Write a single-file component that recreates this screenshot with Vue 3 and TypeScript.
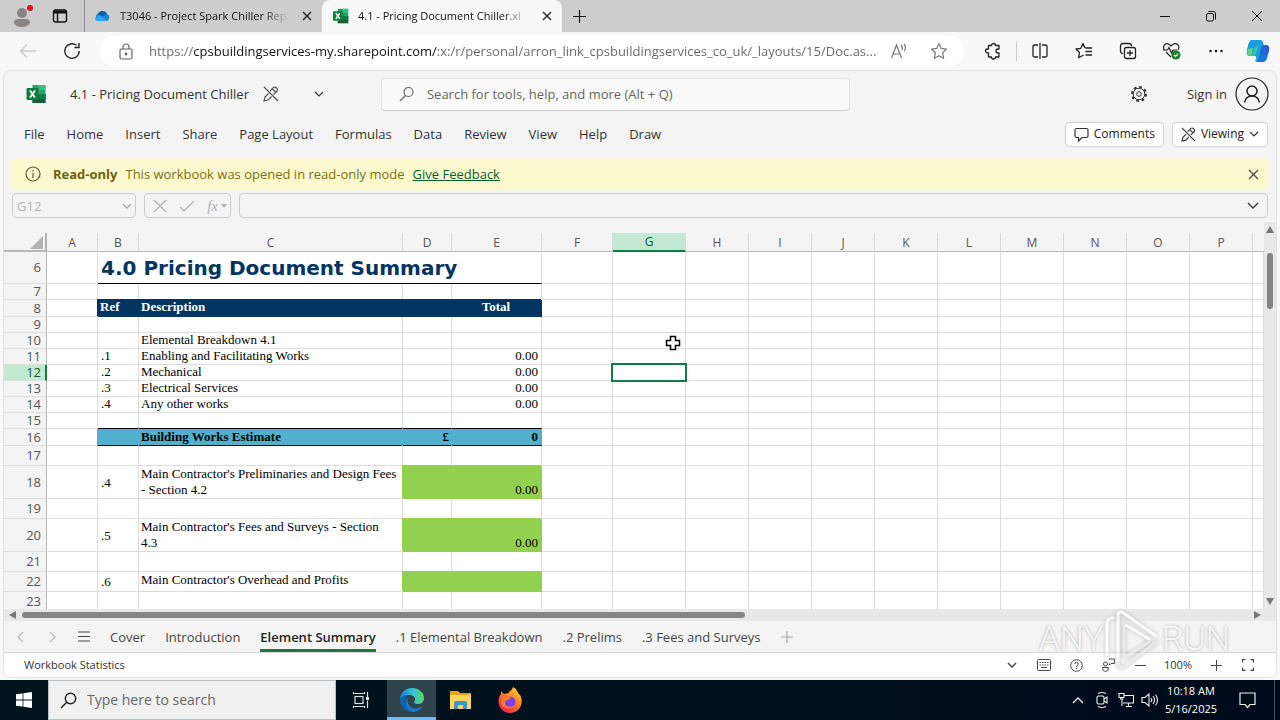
<script setup lang="ts">
import { ref } from 'vue'

interface Row { n: number; h: number; band?: string; b?: string; c?: string; d?: string; e?: string }

const url = ref('https://cpsbuildingservices-my.sharepoint.com/:x:/r/personal/arron_link_cpsbuildingservices_co_uk/_layouts/15/Doc.as...')
const cellRef = ref('G12')
const formula = ref('')
const search = ref('')
const taskSearch = ref('')

const browserTabs = [
  { title: 'T3046 - Project Spark Chiller Repl', icon: 'cloud', active: false },
  { title: '4.1 - Pricing Document Chiller.xl', icon: 'excel', active: true },
]
const menus = ['File', 'Home', 'Insert', 'Share', 'Page Layout', 'Formulas', 'Data', 'Review', 'View', 'Help', 'Draw']
const sheets = ['Cover', 'Introduction', 'Element Summary', '.1 Elemental Breakdown', '.2 Prelims', '.3 Fees and Surveys']
const columns = ['A', 'B', 'C', 'D', 'E', 'F', 'G', 'H', 'I', 'J', 'K', 'L', 'M', 'N', 'O', 'P']
const tail = [...columns.slice(5), '']

const rows: Row[] = [
  { n: 6, h: 32, band: 'title', b: '4.0 Pricing Document Summary' },
  { n: 7, h: 16 },
  { n: 8, h: 17, band: 'navy', b: 'Ref', c: 'Description', e: 'Total' },
  { n: 9, h: 16 },
  { n: 10, h: 16, c: 'Elemental Breakdown 4.1' },
  { n: 11, h: 16, b: '.1', c: 'Enabling and Facilitating Works', e: '0.00' },
  { n: 12, h: 16, b: '.2', c: 'Mechanical', e: '0.00' },
  { n: 13, h: 16, b: '.3', c: 'Electrical Services', e: '0.00' },
  { n: 14, h: 16, b: '.4', c: 'Any other works', e: '0.00' },
  { n: 15, h: 16, band: 'before-total' },
  { n: 16, h: 17, band: 'total', c: 'Building Works Estimate', d: '£', e: '0' },
  { n: 17, h: 20 },
  { n: 18, h: 33, band: 'green', b: '.4', c: "Main Contractor's Preliminaries and Design Fees\n- Section 4.2", e: '0.00' },
  { n: 19, h: 20 },
  { n: 20, h: 33, band: 'green', b: '.5', c: "Main Contractor's Fees and Surveys - Section\n4.3", e: '0.00' },
  { n: 21, h: 20 },
  { n: 22, h: 20, band: 'green', b: '.6', c: "Main Contractor's Overhead and Profits" },
  { n: 23, h: 20 },
]
</script>

<template>
  <div class="desktop">
    <header class="tabstrip">
      <button class="profile" aria-label="Profile">
        <svg width="22" height="24" viewBox="0 0 22 24"><circle cx="10" cy="9" r="5" fill="#8a8582"/><path d="M2 19q0-4 4-4h8q4 0 4 4-2 4-8 4t-8-4z" fill="#8a8582"/><circle cx="18" cy="4" r="3" fill="#e00b1c"/></svg>
      </button>
      <button class="workspaces" aria-label="Tab actions">
        <svg width="16" height="16" viewBox="0 0 16 16" fill="none" stroke="#111" stroke-width="1.4"><rect x="1.5" y="2" width="13" height="12" rx="2"/><path d="M2 4h12" stroke-width="3"/><path d="M5.5 4v10"/></svg>
      </button>
      <div v-for="t in browserTabs" :key="t.title" class="btab" :class="{ active: t.active }">
        <svg v-if="t.icon === 'cloud'" width="17" height="16" viewBox="0 0 17 16"><path d="M5 13a4 4 0 0 1-1-7.500A5 5 0 0 1 13 6a3.800 3.800 0 0 1 0 7z" fill="#1683dc"/><path d="M4 5.500A5 5 0 0 1 13 6L6 10z" fill="#0a5ca8"/><path d="M1 10l5-3 8 6H4a3 3 0 0 1-3-3z" fill="#2fa3ee"/></svg>
        <svg v-else width="16" height="16" viewBox="0 0 20 20"><path d="M6 1h13v18H6z" fill="#21a366"/><path d="M12 1h7v5h-7z" fill="#33c481"/><path d="M6 10h13v9H6z" fill="#185c37"/><path d="M12 10h7v5h-7z" fill="#107c41"/><rect y="4" width="12" height="12" rx="1" fill="#107c41"/><path d="M3.500 6.500l5 7m0-7l-5 7" stroke="#fff" stroke-width="1.800"/></svg>
        <span class="btitle">{{ t.title }}</span>
        <button aria-label="Close tab"><svg width="10" height="10" viewBox="0 0 10 10" stroke="#222" stroke-width="1.400"><path d="M1 1l8 8M9 1l-8 8"/></svg></button>
      </div>
      <button class="newtab" aria-label="New tab"><svg width="15" height="15" viewBox="0 0 15 15" stroke="#111" stroke-width="1.200"><path d="M7.500 1v13M1 7.500h13"/></svg></button>
      <div class="winbtns">
        <button aria-label="Minimize"><svg width="12" height="12" viewBox="0 0 12 12" stroke="#111"><path d="M1 6.500h10"/></svg></button>
        <button aria-label="Restore"><svg width="12" height="12" viewBox="0 0 12 12" fill="none" stroke="#111"><rect x="1.500" y="3.500" width="7" height="7.500" rx="1.500"/><path d="M3.500 1.500h5q2 0 2 2v6"/></svg></button>
        <button aria-label="Close"><svg width="12" height="12" viewBox="0 0 12 12" stroke="#111"><path d="M1 1l10 10M11 1L1 11"/></svg></button>
      </div>
    </header>

    <div class="toolbar">
      <button aria-label="Back"><svg width="18" height="16" viewBox="0 0 18 16" fill="none" stroke="#c9c9c9" stroke-width="1.300"><path d="M17 8H1.500M8 1.500L1.500 8 8 14.500"/></svg></button>
      <button aria-label="Refresh"><svg width="18" height="18" viewBox="0 0 18 18" fill="none" stroke="#222" stroke-width="1.400"><path d="M16.300 9A7.300 7.300 0 1 1 13.500 3.300M16 1v4.500h-4.500"/></svg></button>
      <label class="address">
        <svg width="14" height="17" viewBox="0 0 14 17" fill="none" stroke="#666" stroke-width="1.200"><rect x="1" y="6" width="12" height="10" rx="1.500"/><path d="M4 6V4a3 3 0 0 1 6 0v2"/><circle cx="7" cy="11" r=".8" fill="#666"/></svg>
        <input v-model="url" aria-label="Address" />
        <button aria-label="Read aloud"><svg width="18" height="16" viewBox="0 0 18 16" fill="none" stroke="#777" stroke-width="1.200"><path d="M1.500 15L6.500 2l5 13M3 11h7M11 2q2 2 1 5M14 1q2.500 3 .5 7"/></svg></button>
        <button aria-label="Add favorite"><svg width="18" height="18" viewBox="0 0 18 18" fill="none" stroke="#777" stroke-width="1.200" stroke-linejoin="round"><path d="M9 1.500l2.300 4.900 5.200.7-3.800 3.700.9 5.500L9 13.700l-4.600 2.600.9-5.500L1.500 7.100l5.200-.7z"/></svg></button>
      </label>
      <button class="ext" aria-label="Extensions"><svg width="18" height="18" viewBox="0 0 18 18" fill="none" stroke="#222" stroke-width="1.300" stroke-linejoin="round"><path d="M4.500 3.500h3a2 2 0 0 1 4 0H15v3.500h-1a2 2 0 0 0 0 4h1v4h-3.500a2 2 0 0 1-4 0h-3V11h-1a2 2 0 1 1 0-4h1z"/></svg></button>
      <span class="sep"></span>
      <button aria-label="Split screen"><svg width="18" height="18" viewBox="0 0 18 18" fill="none" stroke="#222" stroke-width="1.300"><path d="M7 3H3.500Q2 3 2 4.500v9Q2 15 3.500 15H7M11 3h3.500Q16 3 16 4.500v9q0 1.500-1.500 1.500H11M9 1v16"/></svg></button>
      <button aria-label="Favorites"><svg width="18" height="18" viewBox="0 0 18 18" fill="none" stroke="#222" stroke-width="1.300" stroke-linejoin="round"><path d="M10 6L8 1.500 5.800 6.300 1 7l3.500 3.500-.8 5.300 5-2.800M10.500 6H17M10.500 9.500H17M10.500 13H17"/></svg></button>
      <button aria-label="Collections"><svg width="18" height="18" viewBox="0 0 18 18" fill="none" stroke="#222" stroke-width="1.300"><path d="M4 11.500A2.500 2.500 0 0 1 1.500 9V4A2.500 2.500 0 0 1 4 1.500h6A2.500 2.500 0 0 1 12.500 4"/><rect x="5.500" y="5.500" width="11" height="11" rx="2"/><path d="M11 8v6M8 11h6"/></svg></button>
      <button aria-label="Browser essentials"><svg width="20" height="18" viewBox="0 0 20 18" fill="none" stroke="#222" stroke-width="1.200"><path d="M2.500 8C0 4 3.500.5 7 2.200L9 4l2-1.800C15 .5 18.500 4 16 8M4 10l5 5M1 8h4.500L7 5.500 9.500 11 11 8h4"/><circle cx="14" cy="13" r="4.500" fill="#15842a" stroke="none"/><path d="M12 13l1.500 1.500L16 12" stroke="#fff"/></svg></button>
      <button aria-label="More"><svg width="16" height="4" viewBox="0 0 16 4" fill="#222"><circle cx="2.500" cy="2" r="1.300"/><circle cx="8" cy="2" r="1.300"/><circle cx="13.500" cy="2" r="1.300"/></svg></button>
      <button class="copilot" aria-label="Copilot"><svg width="24" height="24" viewBox="0 0 24 24"><path d="M6 1h8q3 0 3.500 4L14 18q-1 4-5 4 2-3 1-5H4q-4 0-3-5L3 4q1-3 3-3z" fill="#18a0d7"/><path d="M6 1h8l-5 16H4q-4 0-3-5L3 4q1-3 3-3z" fill="#37c3a6"/><path d="M6 1h8q3 0 3.500 6H12q-3 0-4 4L7 14q-1 3-5 2-2-2-1-5L3 4q1-3 3-3z" fill="#1b9de2"/><path d="M2 10l5-1-1 6q-4 3-5-1z" fill="#62cf83"/><path d="M17 6h3q4 0 3 6l-2 7q-1 4-4 4H9q3-1 4-5l2-9q1-3 2-3z" fill="#1674de"/><path d="M17 6h3q4 0 3 6l-2 4h-7z" fill="#2b5fd6"/></svg></button>
    </div>

    <main class="page">
      <div class="apphead">
        <svg class="xl" width="21" height="20" viewBox="0 0 20 20"><path d="M6 1h13v18H6z" fill="#21a366"/><path d="M12 1h7v5h-7z" fill="#33c481"/><path d="M6 10h13v9H6z" fill="#185c37"/><path d="M12 10h7v5h-7z" fill="#107c41"/><rect y="4" width="12" height="12" rx="1" fill="#107c41"/><path d="M3.500 6.500l5 7m0-7l-5 7" stroke="#fff" stroke-width="1.800"/></svg>
        <span class="doc">4.1 - Pricing Document Chiller</span>
        <svg class="pen" width="16" height="16" viewBox="0 0 16 16" fill="none" stroke="#555" stroke-width="1.200"><path d="M1 1l14 14M7 5l3.500-3.500q1.500-1 3 .5t.5 3L10.500 8.500M8.500 10.500L5 14l-4 1 1-4 3.500-3.500M9.500 3l3 3"/></svg>
        <button class="docmenu" aria-label="File details"><svg width="10" height="6" viewBox="0 0 10 6" fill="none" stroke="#333" stroke-width="1.200"><path d="M1 1l4 4 4-4"/></svg></button>
        <label class="search">
          <svg width="16" height="16" viewBox="0 0 16 16" fill="none" stroke="#666" stroke-width="1.200"><circle cx="9.500" cy="6" r="4.500"/><path d="M6.500 9.500L1 15"/></svg>
          <input v-model="search" aria-label="Search" placeholder="Search for tools, help, and more (Alt + Q)" />
        </label>
        <button class="gear" aria-label="Settings"><svg width="18" height="18" viewBox="0 0 18 18" fill="none" stroke="#333"><circle cx="9" cy="9" r="7" stroke-width="2" stroke-dasharray="2.750 2.750"/><circle cx="9" cy="9" r="5.800"/><circle cx="9" cy="9" r="2.300"/></svg></button>
        <a class="signin" href="#">Sign in<svg width="34" height="34" viewBox="0 0 34 34" fill="none" stroke="#222" stroke-width="1.200"><circle cx="17" cy="17" r="16"/><circle cx="17" cy="14" r="5" stroke-width="1.500"/><path d="M9.500 25.500q1.500-6.500 7.500-6.500t7.500 6.500" stroke-width="1.500"/></svg></a>
      </div>

      <div class="menubar">
        <button v-for="m in menus" :key="m" class="menu">{{ m }}</button>
        <button class="pill comments"><svg width="15" height="15" viewBox="0 0 15 15" fill="none" stroke="#333" stroke-width="1.200"><path d="M2.500 1.500h10q1.500 0 1.500 1.500v6q0 1.500-1.500 1.500H8L4.500 14v-3.500h-2Q1 10.500 1 9V3q0-1.500 1.500-1.500z"/></svg>Comments</button>
        <button class="pill"><svg width="15" height="15" viewBox="0 0 16 16" fill="none" stroke="#333" stroke-width="1.200"><path d="M1 1l14 14M7 5l3.500-3.500q1.500-1 3 .5t.5 3L10.500 8.500M8.500 10.500L5 14l-4 1 1-4 3.500-3.500M9.500 3l3 3"/></svg>Viewing<svg width="10" height="6" viewBox="0 0 10 6" fill="none" stroke="#333" stroke-width="1.200"><path d="M1 1l4 4 4-4"/></svg></button>
      </div>

      <div class="notice">
        <svg width="16" height="16" viewBox="0 0 16 16" fill="none" stroke="#5c5a3c" stroke-width="1.200"><circle cx="8" cy="8" r="7"/><path d="M8 7v5M8 4v1.500"/></svg>
        <strong>Read-only</strong>
        <span>This workbook was opened in read-only mode</span>
        <a href="#">Give Feedback</a>
        <button aria-label="Dismiss"><svg width="11" height="11" viewBox="0 0 11 11" stroke="#444" stroke-width="1.200"><path d="M1 1l9 9M10 1l-9 9"/></svg></button>
      </div>

      <div class="formulabar">
        <label class="namebox"><input v-model="cellRef" aria-label="Name box" /><svg width="10" height="6" viewBox="0 0 10 6" fill="none" stroke="#aaa" stroke-width="1.400"><path d="M1 1l4 4 4-4"/></svg></label>
        <div class="fx">
          <button aria-label="Cancel"><svg width="14" height="14" viewBox="0 0 14 14" stroke="#b3b3b3" stroke-width="1.400"><path d="M1 1l12 12M13 1L1 13"/></svg></button>
          <button aria-label="Enter"><svg width="16" height="14" viewBox="0 0 16 14" fill="none" stroke="#b3b3b3" stroke-width="1.400"><path d="M1 8l4 4L15 2"/></svg></button>
          <button class="fxbtn" aria-label="Insert function"><i>fx</i><svg width="6" height="4" viewBox="0 0 6 4"><path d="M0 0h6L3 4z" fill="#b3b3b3"/></svg></button>
        </div>
        <label class="fline"><input v-model="formula" aria-label="Formula" /><svg width="12" height="7" viewBox="0 0 12 7" fill="none" stroke="#333" stroke-width="1.300"><path d="M1 1l5 5 5-5"/></svg></label>
      </div>

      <div class="sheet">
        <div class="gridwrap">
          <table>
            <colgroup><col class="w-rh" /><col v-for="c in columns" :key="c" :class="'w-' + c" /><col /></colgroup>
            <thead>
              <tr>
                <th class="corner"><svg width="13" height="13" viewBox="0 0 13 13"><path d="M13 0v13H0z" fill="#b3b3b3"/></svg></th>
                <th v-for="c in columns" :key="c" scope="col" :class="{ sel: c === 'G' }">{{ c }}</th>
                <th class="rest"></th>
              </tr>
            </thead>
            <tbody>
              <tr v-for="r in rows" :key="r.n" :class="r.band" :style="{ height: r.h + 'px' }">
                <th scope="row" :class="{ sel: r.n === 12 }">{{ r.n }}</th>
                <td></td>
                <td v-if="r.band === 'title'" class="heading" colspan="4">{{ r.b }}</td>
                <template v-else>
                  <td class="b">{{ r.b }}</td>
                  <td class="c">{{ r.c }}</td>
                  <td class="d">{{ r.d }}</td>
                  <td class="e">{{ r.e }}</td>
                </template>
                <td v-for="c in tail" :key="c" class="x"><span v-if="c === 'G' && r.n === 12" class="selection"></span></td>
              </tr>
            </tbody>
          </table>
          <svg class="cursor" width="16" height="16" viewBox="0 0 16 16"><path d="M5.500 1.500h5v4h4v5h-4v4h-5v-4h-4v-5h4z" fill="#fff" stroke="#000" stroke-width="1.500"/></svg>
        </div>
        <div class="vscroll">
          <svg width="8" height="7" viewBox="0 0 8 7"><path d="M4 0l4 7H0z" fill="#777"/></svg>
          <div class="vthumb"></div>
          <svg class="down" width="8" height="7" viewBox="0 0 8 7"><path d="M4 7l4-7H0z" fill="#777"/></svg>
        </div>
      </div>
      <div class="hscroll">
        <svg width="7" height="8" viewBox="0 0 7 8"><path d="M0 4l7-4v8z" fill="#777"/></svg>
        <div class="track"><div class="hthumb"></div></div>
        <svg width="7" height="8" viewBox="0 0 7 8"><path d="M7 4L0 0v8z" fill="#777"/></svg>
      </div>

      <nav class="sheettabs">
        <button class="nav" aria-label="Previous sheet"><svg width="7" height="12" viewBox="0 0 7 12" fill="none" stroke="#bbb" stroke-width="1.300"><path d="M6 1L1 6l5 5"/></svg></button>
        <button class="nav" aria-label="Next sheet"><svg width="7" height="12" viewBox="0 0 7 12" fill="none" stroke="#bbb" stroke-width="1.300"><path d="M1 1l5 5-5 5"/></svg></button>
        <button class="nav" aria-label="All sheets"><svg width="12" height="11" viewBox="0 0 12 11" stroke="#444" stroke-width="1.200"><path d="M0 1h12M0 5.500h12M0 10h12"/></svg></button>
        <button v-for="s in sheets" :key="s" class="stab" :class="{ on: s === 'Element Summary' }">{{ s }}</button>
        <button class="nav" aria-label="New sheet"><svg width="12" height="12" viewBox="0 0 12 12" stroke="#aaa" stroke-width="1.200"><path d="M6 0v12M0 6h12"/></svg></button>
      </nav>

      <footer class="status">
        <button class="stats">Workbook Statistics</button>
        <button aria-label="Status options"><svg width="10" height="7" viewBox="0 0 10 7" fill="none" stroke="#555" stroke-width="1.700"><path d="M1 1l4 4 4-4"/></svg></button>
        <button aria-label="Keyboard"><svg width="14" height="12" viewBox="0 0 14 12" fill="none" stroke="#444"><rect x=".5" y=".5" width="13" height="11" rx="1"/><path d="M2.500 3.500h9M2.500 6h9" stroke-dasharray="1.500 1"/><path d="M4 8.500h6"/></svg></button>
        <button aria-label="Help"><svg width="13" height="13" viewBox="0 0 13 13" fill="none" stroke="#444"><circle cx="6.500" cy="6.500" r="5.800"/><path d="M4.700 5q.2-1.700 1.800-1.700T8.300 5c0 1.200-1.800 1.300-1.800 3M6.500 9v1.200"/></svg></button>
        <button aria-label="Feedback"><svg width="14" height="14" viewBox="0 0 14 14" fill="none" stroke="#444"><circle cx="4.500" cy="6" r="2"/><path d="M1.500 9.500h6q0 4-3 4t-3-4zM7.500 1h6v4.500H10L8.500 7V5.500"/></svg></button>
        <button aria-label="Zoom out"><svg width="11" height="11" viewBox="0 0 11 11" stroke="#444"><path d="M0 5.500h11"/></svg></button>
        <button class="zoom">100%</button>
        <button aria-label="Zoom in"><svg width="11" height="11" viewBox="0 0 11 11" stroke="#444"><path d="M0 5.500h11M5.500 0v11"/></svg></button>
        <button aria-label="Full screen"><svg width="12" height="12" viewBox="0 0 12 12" fill="none" stroke="#444" stroke-width="1.200"><path d="M.6 3.500v-3h3M8.400.6h3v3M11.400 8.400v3h-3M3.600 11.400h-3v-3"/></svg></button>
      </footer>
    </main>

    <footer class="taskbar">
      <button class="start" aria-label="Start"><svg width="16" height="16" viewBox="0 0 16 16" fill="#fff"><path d="M0 2.300l6.600-.9v6.200H0zM7.400 1.300L16 0v7.600H7.400zM0 8.400h6.600v6.200L0 13.700zM7.400 8.400H16V16l-8.600-1.300z"/></svg></button>
      <label class="tsearch"><svg width="17" height="17" viewBox="0 0 17 17" fill="none" stroke="#222" stroke-width="1.400"><circle cx="10.500" cy="6.500" r="5.200"/><path d="M6.800 10.200L1 16"/></svg><input v-model="taskSearch" aria-label="Windows search" placeholder="Type here to search" /></label>
      <button aria-label="Task view"><svg width="18" height="18" viewBox="0 0 18 18" fill="none" stroke="#ddd" stroke-width="1.200"><rect x="3" y="5.500" width="8" height="7"/><path d="M1.500 1v1.500h11V1M1.500 17v-1.500h11V17M15.500 1v5M15.500 9.500V17"/><path d="M14 7.500h3" stroke-width="3"/></svg></button>
      <button class="running" aria-label="Microsoft Edge"><svg width="24" height="24" viewBox="0 0 24 24"><defs><linearGradient id="eg" x1="0" x2="1"><stop offset="0" stop-color="#1687d4"/><stop offset=".55" stop-color="#35c1d8"/><stop offset="1" stop-color="#5fd75d"/></linearGradient></defs><path d="M0 12C0 5 5 0 12 0c7 0 12 4.500 12 10 0 4-3 6-6 6-3.500 0-4.500-1.500-3.500-3 1.500-2 0-6-4.500-6-5 0-9 2-10 5z" fill="url(#eg)"/><path d="M0 12c1-4 5-5.500 9-5-4 2-4 6-3 9 1.500 4.500 6 7.500 10.500 7C8 26 0 20 0 12z" fill="#0d62b5"/><path d="M9 8.500C6 12 8 20 15 20.500c3 .2 5.500-1 7.500-2.500-2 4-6 6-10 6-7-2-8.500-11-3.500-15.500z" fill="#1479ca"/></svg></button>
      <button aria-label="File Explorer"><svg width="22" height="20" viewBox="0 0 22 20"><path d="M0 1h8l2 2h11v5H0z" fill="#e8a317"/><path d="M0 5h21v14H0z" fill="#ffd45f"/><path d="M4 19v-6q0-2 2-2h9q2 0 2 2v6h-4v-4H8v4z" fill="#3f95d2"/></svg></button>
      <button aria-label="Firefox"><svg width="24" height="26" viewBox="0 0 24 26"><defs><linearGradient id="ff" x1="1" y1="0" x2=".3" y2="1"><stop offset="0" stop-color="#ffe14a"/><stop offset=".45" stop-color="#ff8a1e"/><stop offset="1" stop-color="#f5205a"/></linearGradient></defs><path d="M15 0c5 3 4 5 6 7s3 4 2.500 9C23 22 18 26 12 26S1 21.500.5 15C.2 11 1.500 9 3 7V4l3 3q2-1 4-.8C11 4 14 4 15 0z" fill="url(#ff)"/><circle cx="12" cy="15" r="5.500" fill="#7b3ee8"/><path d="M4 9q5-2 9 2l-3 2q-3 0-3 3c0 4 6 5 9 2-2 5-12 5-13-3z" fill="#ff7a2a"/></svg></button>
      <div class="tray">
        <button aria-label="Show hidden icons"><svg width="12" height="7" viewBox="0 0 12 7" fill="none" stroke="#eee" stroke-width="1.300"><path d="M1 6l5-5 5 5"/></svg></button>
        <button aria-label="Meet now"><svg width="14" height="18" viewBox="0 0 14 18" fill="none" stroke="#eee" stroke-width="1.100"><rect x="2" y="5" width="7" height="8" rx="1.500"/><path d="M9 8l3-2v6l-3-2M3 2.500q4-2 8 0M3 15.500q4 2 8 0"/></svg></button>
        <button aria-label="Network"><svg width="16" height="16" viewBox="0 0 16 16" fill="none" stroke="#eee" stroke-width="1.100"><path d="M6 3.500h9.500V11H5M8 14.500h6M10.500 11v3.500M4 7v7M1 1.500h5v4H1zM2.500 5.500V7h3"/></svg></button>
        <button aria-label="Volume"><svg width="18" height="16" viewBox="0 0 18 16" fill="none" stroke="#eee" stroke-width="1.100"><path d="M1 5.500h3L8 2v12l-4-3.500H1zM10 6q1.500 2 0 4M12 4q3 4 0 8M14.500 2.500q4 5.500 0 11"/></svg></button>
        <button class="clock"><span>10:18 AM</span><span>5/16/2025</span></button>
        <button class="notif" aria-label="Notifications"><svg width="17" height="17" viewBox="0 0 17 17" fill="none" stroke="#eee" stroke-width="1.200"><path d="M1 1h15v11.500h-5L8.500 15.500 6 12.500H1z"/></svg></button>
        <span class="peek"></span>
      </div>
    </footer>

    <div class="mark" aria-hidden="true">
      <span>ANY</span>
      <svg width="58" height="64" viewBox="0 0 58 64" fill="none" stroke="#fff" stroke-width="3" stroke-linejoin="round" stroke-linecap="round"><path d="M3 50V14q0-5 6-5"/><path d="M14 54V6q0-4 4-3l34 24"/><path d="M20 15l25 15"/><path d="M20 15v34l25-16M14 54q0 7 7 3l31-24" stroke="#e6e6e6"/></svg>
      <span>RUN</span>
    </div>
  </div>
</template>

<style>
body { margin: 0; overflow: hidden; }
</style>

<style scoped>
* { box-sizing: border-box; }
.desktop { position: relative; display: flex; flex-direction: column; height: 100vh; font: 13px/18px "Open Sans", "Noto Sans", sans-serif; color: #333; background: #f8f8f8; overflow: hidden; }
button { border: 0; background: none; padding: 0; margin: 0; font: inherit; color: inherit; display: flex; align-items: center; justify-content: center; white-space: nowrap; flex: none; }
input { border: 0; outline: 0; background: none; padding: 0; font: inherit; color: inherit; flex: 1; min-width: 0; }
svg { flex: none; display: block; }

.tabstrip { display: flex; height: 32px; background: #cdcdcd; flex: none; color: #111; }
.profile { width: 44px; padding-left: 2px; }
.workspaces { width: 32px; }
.btab { display: flex; align-items: center; width: 238px; padding: 0 5px 0 9px; gap: 9px; margin-left: 8px; border-left: 1px solid #8b8f98; }
.btab.active { background: #f8f8f8; border: 0; border-radius: 8px 8px 0 0; width: 240px; margin-left: 0; padding-left: 11px; }
.btitle { flex: 1; min-width: 0; overflow: hidden; white-space: nowrap; font-size: 11px; mask-image: linear-gradient(90deg, #000 85%, transparent); }
.btab button { width: 20px; height: 20px; }
.newtab { width: 35px; }
.winbtns { margin-left: auto; display: flex; }
.winbtns button { width: 46px; }

.toolbar { display: flex; align-items: center; height: 38px; padding: 0 2px 0 6px; flex: none; }
.toolbar > button { width: 44px; height: 32px; }
.toolbar > .copilot { width: 40px; }
.toolbar > .ext { margin-left: 7px; }
.sep { width: 1px; height: 20px; margin: 0 1px; background: #ccc; }
.address { flex: 1; display: flex; align-items: center; height: 32px; padding: 0 5px 0 19px; margin-left: 6px; background: #fff; border-radius: 16px; min-width: 0; }
.address input { margin-left: 16px; height: 24px; color: transparent; background: linear-gradient(90deg, #666 45px, #111 45px, #111 287px, #666 287px); -webkit-background-clip: text; background-clip: text; }
.address button { width: 40px; }

.page { flex: 1; min-height: 0; display: flex; flex-direction: column; margin: 0 3px 2px; border: 1px solid #e3e3e3; border-radius: 8px; background: #f4f4f4; overflow: hidden; }
.apphead { display: flex; align-items: center; height: 46px; flex: none; padding: 0 7px 0 22px; }
.doc { margin-left: 23px; white-space: nowrap; }
.pen { margin-left: 14px; }
.docmenu { width: 30px; height: 30px; margin-left: 25px; }
.search { display: flex; align-items: center; flex: 0 1 469px; height: 33px; margin-left: 47px; padding: 0 17px; gap: 12px; background: #f9f9f9; border: 1px solid #e3e3e3; border-bottom-color: #ccc; border-radius: 4px; color: #666; }
input::placeholder { color: #666; opacity: 1; }
.gear { width: 32px; margin-left: auto; }
.signin { display: flex; align-items: center; gap: 8px; margin-left: 32px; color: #333; text-decoration: none; white-space: nowrap; }

.menubar { display: flex; align-items: center; height: 34px; flex: none; padding: 0 8px 0 9px; }
.menu { padding: 0 11px; height: 28px; }
.pill { height: 25px; border: 1px solid #d1d1d1; border-radius: 4px; background: #fff; padding: 0 8px; gap: 5px; font-size: 12px; color: #222; margin-left: 8px; }
.comments { margin-left: auto; }

.notice { display: flex; align-items: center; height: 32px; flex: none; margin: 7px 7px 0; padding: 0 10px 0 14px; border-radius: 6px; background: #fdf9cf; color: #78710d; }
.notice strong { margin: 0 8px 0 12px; color: #6b6409; }
.notice a { margin-left: 8px; color: #0c5c2e; }
.notice button { width: 11px; margin-left: auto; }

.formulabar { display: flex; gap: 8px; height: 25px; flex: none; margin: 3px 8px 0; color: #b3b3b3; }
.namebox, .fx, .fline { display: flex; align-items: center; border: 1px solid #ccc; border-radius: 4px; }
.namebox { width: 124px; padding: 0 3px 0 4px; }
.namebox input { color: #b3b3b3; }
.fx { width: 87px; justify-content: space-between; padding: 0 3px 0 8px; }
.fx i { font: italic 15px/18px "Liberation Serif", serif; }
.fxbtn { gap: 3px; }
.fline { flex: 1; padding: 0 8px; min-width: 0; }

.sheet { flex: 1; min-height: 0; display: flex; margin-top: 4px; }
.gridwrap { flex: 1; min-width: 0; position: relative; overflow: hidden; padding-top: 11px; background: #f4f4f4; }
table { width: 100%; table-layout: fixed; border-collapse: separate; border-spacing: 0; }
.w-rh { width: 43px; } .w-A { width: 51px; } .w-B { width: 41px; } .w-C { width: 264px; } .w-D { width: 49px; }
.w-E { width: 90px; } .w-F { width: 71px; } .w-G { width: 73px; } .w-H, .w-I, .w-J, .w-K, .w-L, .w-M, .w-N, .w-O, .w-P { width: 63px; }
th { padding: 0; font-weight: 400; color: #555; line-height: 15px; background: #f4f4f4; }
thead th { height: 19px; border-right: 1px solid #dadada; border-bottom: 1px solid #b8b8b8; font-size: 12px; }
thead th.rest { border-right: 0; }
thead th.sel { background: #c4e9d2; border-bottom: 2px solid #107c41; color: #0e5c30; }
thead th.corner { border-right: 2px solid #b0b0b0; border-bottom-width: 2px; }
.corner svg { margin: 2px 2px 0 auto; }
tbody th { text-align: right; padding-right: 5px; border-right: 1px solid #b8b8b8; border-bottom: 1px solid #dedede; }
tbody th.sel { background: #c4e9d2; border-right: 2px solid #107c41; padding-right: 4px; color: #0e5c30; }
td { padding: 0 2px; background: #fff; border-right: 1px solid #dcdcdc; border-bottom: 1px solid #dcdcdc; font: 13px/13px "Liberation Serif", serif; color: #000; vertical-align: top; white-space: pre-line; }
.x { position: relative; }
.selection { position: absolute; inset: -2px; border: 2px solid #107c41; z-index: 1; }
.b { padding-left: 3px; }
.e { text-align: right; padding-right: 3px; }
.d { text-align: right; }
.heading { padding: 0 3px; vertical-align: middle; font: 700 20px/28px "DejaVu Sans", sans-serif; color: #003461; border-bottom-color: #000; white-space: nowrap; }
.navy .b, .navy .c, .navy .d, .navy .e { background: #003461; color: #fff; font-weight: 700; border-color: #003461; box-shadow: -1px -1px 0 #003461; }
.navy .b { padding-left: 2px; }
.navy .e { text-align: center; }
.before-total .b, .before-total .c, .before-total .d, .before-total .e { border-bottom-color: #000; }
.total .b, .total .c, .total .d, .total .e { background: #50b0cd; font-weight: 700; line-height: 15px; border-right-color: #50b0cd; border-bottom-color: #000; box-shadow: -1px 0 0 #50b0cd; }
.green .b { vertical-align: middle; }
.green .c { line-height: 16px; }
.green .d, .green .e { background: #92d050; border-color: #92d050; box-shadow: -1px -1px 0 #92d050; vertical-align: bottom; line-height: 17px; }
.cursor { position: absolute; left: 661px; top: 113px; }
.vscroll { width: 12px; display: flex; flex-direction: column; align-items: center; padding: 4px 0; background: #e8e8e8; }
.vthumb { width: 6px; height: 56px; margin-top: 20px; border-radius: 3px; background: #858585; }
.down { margin-top: auto; }
.hscroll { flex: none; display: flex; align-items: center; gap: 6px; height: 12px; padding: 0 15px 0 5px; background: #e8e8e8; }
.track { flex: 1; }
.hthumb { width: 59%; height: 6px; border-radius: 3px; background: #858585; }

.sheettabs { display: flex; height: 32px; flex: none; border-bottom: 1px solid #d6d6d6; }
.nav { width: 32px; }
.stab { padding: 0 2px; margin: 0 8px; color: #444; }
.stab.on { font-weight: 600; color: #222; border-bottom: 3px solid #217346; padding: 3px 0 0; margin: 0 10px; }
.status { display: flex; align-items: center; height: 24px; flex: none; padding: 0 12px 0 20px; background: #fff; font-size: 11px; }
.status button { width: 32px; }
.status .stats { width: auto; margin-right: auto; }
.status .zoom { width: 44px; line-height: 14px; }

.taskbar { display: flex; height: 40px; flex: none; background: linear-gradient(90deg, #00141d, #00101d 60%, #000a1a); color: #fff; }
.taskbar > button { width: 49px; }
.taskbar > .start { width: 48px; }
.tsearch { display: flex; align-items: center; width: 288px; padding: 0 11px; gap: 10px; background: #f1f1f1; border: 1px solid #b9c0c4; color: #333; font-size: 14px; }
.taskbar > .running { margin-left: 2px; background: #30444e; border-bottom: 3px solid #76b9ed; padding-top: 3px; }
.tray { display: flex; margin-left: auto; }
.tray button { width: 24px; }
.tray .clock { width: 58px; flex-direction: column; font-size: 11px; line-height: 18px; }
.tray .notif { width: 54px; }
.peek { width: 6px; border-left: 1px solid #44505c; }

.mark { position: absolute; right: 50px; bottom: 47px; display: flex; align-items: center; color: rgba(255, 255, 255, .85); font: 300 34px/28px Roboto, sans-serif; text-shadow: 0 0 3px #aaa; pointer-events: none; }
.mark span { padding-bottom: 6px; }
.mark svg { filter: drop-shadow(0 0 2px #aaa); opacity: .75; }
</style>
